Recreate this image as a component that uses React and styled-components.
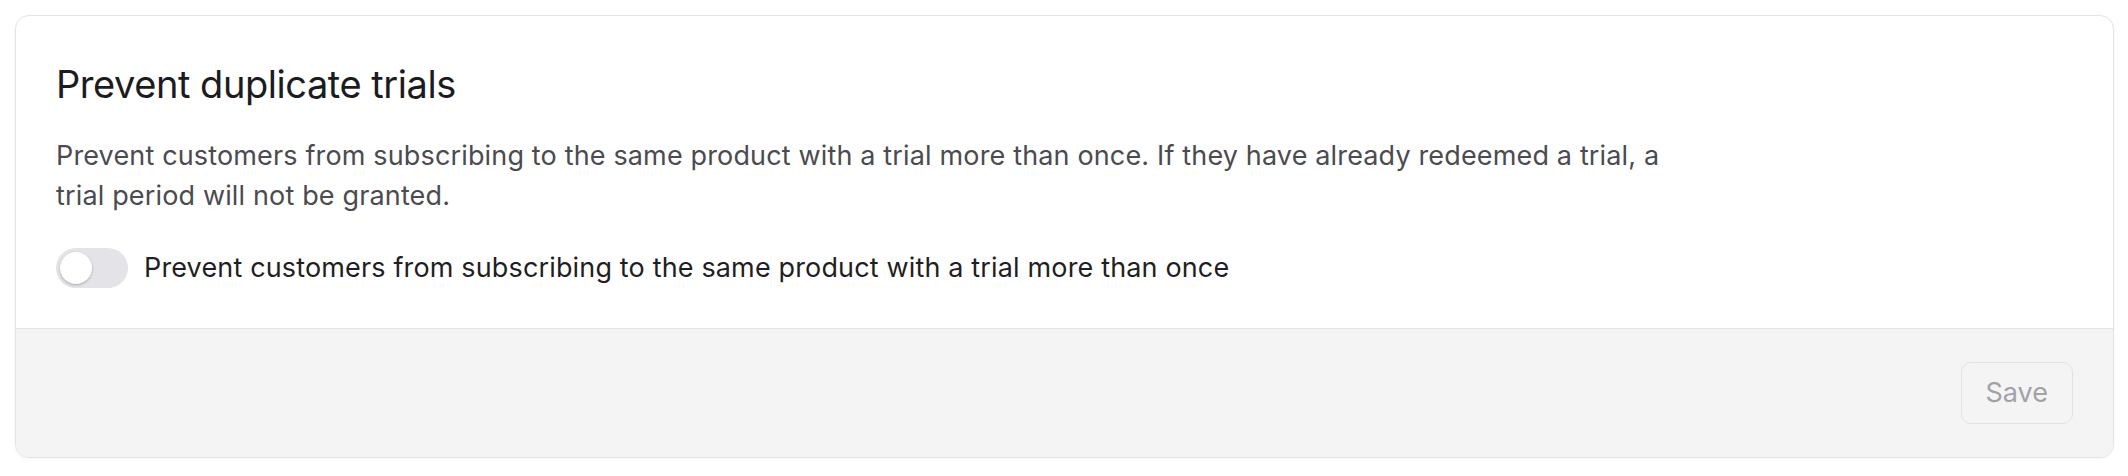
import React, { useState } from 'react'
import styled, { createGlobalStyle } from 'styled-components'

const GlobalStyle = createGlobalStyle`
  html, body {
    margin: 0;
    padding: 0;
    background: #ffffff;
  }
  body {
    font-family: Inter, "Noto Sans", "Liberation Sans", sans-serif;
    -webkit-font-smoothing: antialiased;
  }
`

const Page = styled.div`
  padding: 15px 14px 15px 15px;
`

const Card = styled.section`
  border: 1px solid #e4e4e7;
  border-radius: 14px;
  background: #ffffff;
  box-shadow: 0 1px 3px rgba(0, 0, 0, 0.05);
  overflow: hidden;
`

const Body = styled.div`
  padding: 40px;
  display: flex;
  flex-direction: column;
`

const Title = styled.h2`
  margin: 0;
  font-size: 38px;
  line-height: 56px;
  font-weight: 400;
  color: #1c1c1e;
  letter-spacing: -0.45px;
`

const Description = styled.p`
  margin: 24px 0 0;
  max-width: 1630px;
  font-size: 27px;
  line-height: 40px;
  color: #4b4b50;
  letter-spacing: 0.15px;
`

const ToggleRow = styled.label`
  margin-top: 32px;
  display: flex;
  align-items: center;
  gap: 16px;
  cursor: pointer;
`

const Track = styled.span`
  position: relative;
  flex: none;
  width: 72px;
  height: 40px;
  border-radius: 20px;
  background: ${props => (props.$on ? '#2563eb' : '#e4e4e8')};
  transition: background 0.2s;
`

const Knob = styled.span`
  position: absolute;
  top: 4px;
  left: ${props => (props.$on ? '36px' : '4px')};
  width: 32px;
  height: 32px;
  border-radius: 50%;
  background: #ffffff;
  box-shadow: 0 1px 3px rgba(0, 0, 0, 0.22), 0 1px 1px rgba(0, 0, 0, 0.06);
  transition: left 0.2s;
`

const ToggleLabel = styled.span`
  font-size: 27px;
  line-height: 40px;
  color: #1f1f23;
  letter-spacing: 0.15px;
`

const Footer = styled.div`
  border-top: 1px solid #e4e4e7;
  background: #f4f4f5;
  padding: 33px 40px;
  display: flex;
  justify-content: flex-end;
`

const SaveButton = styled.button`
  font-family: inherit;
  font-size: 27px;
  line-height: 40px;
  padding: 10px 24px;
  border: 1px solid #e2e2e6;
  border-radius: 10px;
  background: #f4f4f5;
  color: #a1a1aa;
  cursor: not-allowed;
`

const App = () => {
  const [on, setOn] = useState(false)

  return (
    <Page>
      <GlobalStyle />
      <Card>
        <Body>
          <Title>Prevent duplicate trials</Title>
          <Description>
            Prevent customers from subscribing to the same product with a trial more than once. If they have already redeemed a trial, a trial period will not be granted.
          </Description>
          <ToggleRow onClick={() => setOn(!on)}>
            <Track $on={on}>
              <Knob $on={on} />
            </Track>
            <ToggleLabel>Prevent customers from subscribing to the same product with a trial more than once</ToggleLabel>
          </ToggleRow>
        </Body>
        <Footer>
          <SaveButton disabled>Save</SaveButton>
        </Footer>
      </Card>
    </Page>
  )
}

export default App
